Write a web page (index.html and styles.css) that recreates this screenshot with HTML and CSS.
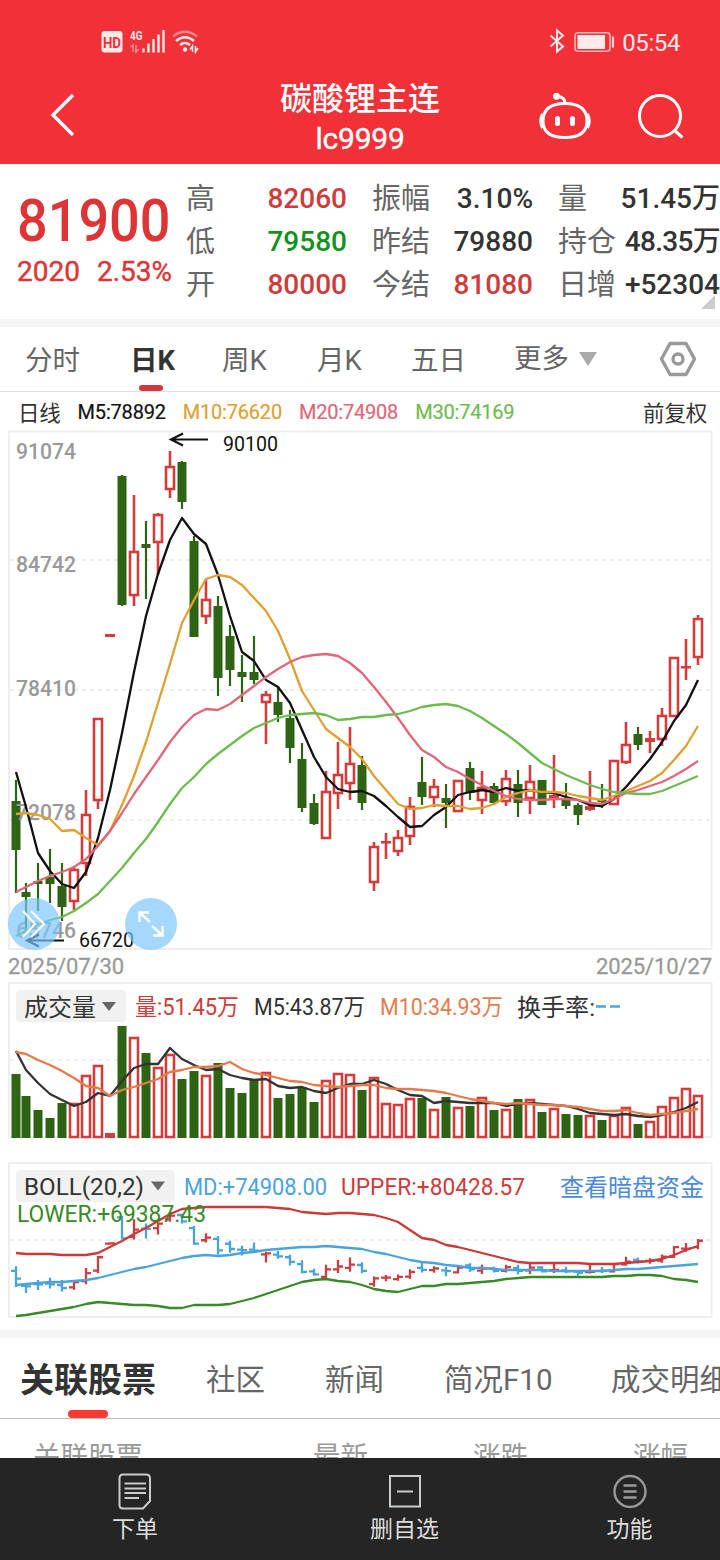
FILE: index.html
```html
<!DOCTYPE html>
<html lang="zh-CN">
<head>
    <meta charset="UTF-8">
    <meta name="viewport" content="width=device-width, initial-scale=1.0">
    <title>碳酸锂主连</title>
    <link rel="stylesheet" href="styles.css">
</head>
<body>
    <div class="app">
        <header class="header">
            <div class="status">
                <svg class="status_left" width="100" height="26" viewBox="100 28 100 26">
                    <rect x="101.5" y="31" width="21" height="21.500" rx="3" fill="#ffe9e9"/>
                    <text x="103" y="47.500" class="hd" textLength="18" lengthAdjust="spacingAndGlyphs">HD</text>
                    <text x="130" y="39.500" class="net" textLength="12.500" lengthAdjust="spacingAndGlyphs">4G</text>
                    <path d="M133 52V45l-2 2M136 45v7l3-3" stroke="#ff8d90" stroke-width="1.500" fill="none"/>
                    <path d="M143.500 48.500V52.500M148.500 43.500V52.500M153.500 39V52.500M158.500 34.500V52.500M163.500 30V52.500" stroke="#ffe9e9" stroke-width="2.400"/>
                    <path d="M173 36.500Q185 27 197 36.500" stroke="#ff8d90" stroke-width="2.200" fill="none"/>
                    <path d="M176 41Q185 33.500 194 41M180 45Q185 41 190 45" stroke="#ffe9e9" stroke-width="2.400" fill="none"/>
                    <circle cx="185" cy="49.500" r="2.200" fill="#ffe9e9"/>
                    <path d="M192.500 52V46l-2.500 3.500M195.500 46v6l2.500-4" stroke="#ffe9e9" stroke-width="1.600" fill="none"/>
                </svg>
                <div class="status_right">
                    <svg width="66" height="26" viewBox="549 28 66 26" fill="none">
                        <path d="M550.500 35.500L563 46.500L557 51.500V30.500L563 35.500L550.500 46.500" stroke="#ffe9e9" stroke-width="2"/>
                        <rect x="575" y="32.700" width="35" height="18.600" rx="3" stroke="#ffb9bb" stroke-width="1.600"/>
                        <rect x="577.500" y="35" width="27.500" height="14" fill="#ffe9e9"/>
                        <path d="M613 36.500v11" stroke="#ffd9da" stroke-width="2.200"/>
                    </svg>
                    <span class="time">05:54</span>
                </div>
            </div>
            <div class="navbar">
                <svg width="30" height="46" viewBox="48 92 30 46" fill="none" stroke="#fff" stroke-width="3.400"><path d="M73 95L53 115L73 135"/></svg>
                <div class="title">
                    <p class="name">碳酸锂主连</p>
                    <p class="code">lc9999</p>
                </div>
                <svg width="150" height="50" viewBox="536 90 150 50" fill="none" stroke="#fff" stroke-width="3">
                    <path d="M565 103.500C579 103.500 587 109 587 121C587 133 579 137.500 565 137.500C551 137.500 543 133 543 121C543 109 551 103.500 565 103.500Z"/>
                    <path d="M565 103.500Q565 96.500 557 96.500"/>
                    <circle cx="556.500" cy="96.300" r="2" fill="#fff"/>
                    <path d="M542.500 114Q539 121 542.500 128M587.500 114Q591 121 587.500 128"/>
                    <path d="M557.500 118.500v5M572.500 118.500v5" stroke-width="5" stroke-linecap="round"/>
                    <circle cx="660" cy="116" r="20.500"/>
                    <path d="M674.500 130.500L682.500 137.500"/>
                </svg>
            </div>
        </header>

        <section class="quote">
            <div class="price">
                <p class="last">81900</p>
                <p class="change"><span>2020</span><span>2.53%</span></p>
            </div>
            <dl class="cols">
                <div><dt>高</dt><dd class="up">82060</dd></div>
                <div><dt>低</dt><dd class="down">79580</dd></div>
                <div><dt>开</dt><dd class="up">80000</dd></div>
            </dl>
            <dl class="cols">
                <div><dt>振幅</dt><dd>3.10%</dd></div>
                <div><dt>昨结</dt><dd>79880</dd></div>
                <div><dt>今结</dt><dd class="up">81080</dd></div>
            </dl>
            <dl class="cols">
                <div><dt>量</dt><dd>51.45万</dd></div>
                <div><dt>持仓</dt><dd class="tight">48.35万</dd></div>
                <div><dt>日增</dt><dd>+52304</dd></div>
            </dl>
            <i class="corner"></i>
        </section>

        <nav class="periods">
            <span>分时</span>
            <span class="active">日K</span>
            <span>周K</span>
            <span>月K</span>
            <span>五日</span>
            <span class="more">更多<i class="arrow"></i></span>
            <svg width="38" height="36" viewBox="0 0 38 36" fill="none" stroke="#999" stroke-width="3.400" stroke-linejoin="round">
                <path d="M11 2.500H27L35.500 18L27 33.500H11L2.500 18Z"/>
                <circle cx="19" cy="18" r="5"/>
            </svg>
        </nav>

        <div class="ma">
            <span class="ma_day">日线</span>
            <span class="m5">M5:78892</span>
            <span class="m10">M10:76620</span>
            <span class="m20">M20:74908</span>
            <span class="m30">M30:74169</span>
            <span class="adjust">前复权</span>
        </div>

        <div class="panel kline">
            <svg width="720" height="520" viewBox="0 430 720 520">
                <path class="grid" d="M10 560H711M10 690H711M10 820H711"/>
                <rect class="frame" x="9" y="431.500" width="702.500" height="517.500"/>
                <g id="candles"></g>
                <g class="axis">
                    <text x="16" y="459" textLength="60">91074</text>
                    <text x="16" y="572" textLength="60">84742</text>
                    <text x="16" y="696" textLength="60">78410</text>
                    <text x="16" y="820" textLength="60">72078</text>
                    <text x="16" y="938" textLength="60">65746</text>
                </g>
                <g id="averages"></g>
                <path class="pointer" d="M208 439.500H171M183 433.500L171 439.500L183 445.500M64 940.500H27M39 934.500L27 940.500L39 946.500"/>
                <text class="mark" x="223" y="451" textLength="55">90100</text>
                <text class="mark" x="79" y="947" textLength="55">66720</text>
            </svg>
            <button class="round slide">
                <svg width="26" height="30" viewBox="0 0 26 30" fill="none" stroke="#fff" stroke-width="2"><path d="M2 2L14 15L2 28M10 2L23 15L10 28"/></svg>
            </button>
            <button class="round full">
                <svg width="28" height="28" viewBox="0 0 28 28" fill="none" stroke="#fff" stroke-width="2.400"><path d="M2.500 12V2.500H12M2.500 2.500L13 12M15 16L25.500 25.500M25.500 16V25.500H16"/></svg>
            </button>
        </div>
        <div class="dates"><span>2025/07/30</span><span>2025/10/27</span></div>

        <div class="panel volume">
            <svg width="720" height="158" viewBox="0 982 720 158">
                <path class="grid" d="M10 1060H711"/>
                <rect class="frame" x="9" y="983" width="702.500" height="154"/>
                <rect class="chip" x="16" y="990" width="110" height="32" rx="4"/>
                <path d="M102 1002h14l-7 9z" fill="#666"/>
                <g class="legend">
                    <text x="24" y="1016" textLength="72" class="dark big">成交量</text>
                    <text x="135" y="1015" textLength="104" class="red">量:51.45万</text>
                    <text x="254" y="1015" textLength="111" class="dark">M5:43.87万</text>
                    <text x="380" y="1015" textLength="123" class="orange">M10:34.93万</text>
                    <text x="517" y="1015.500" textLength="78" class="dark big">换手率:</text>
                </g>
                <path d="M596 1006.500h10M610 1006.500h10" stroke="#4aa3dc" stroke-width="2.400"/>
                <g id="volumes"></g>
            </svg>
        </div>

        <div class="panel boll">
            <svg width="720" height="158" viewBox="0 1162 720 158">
                <path class="grid" d="M10 1240H711"/>
                <rect class="frame" x="9" y="1163" width="702.500" height="154"/>
                <g id="bands"></g>
                <rect class="chip" x="16" y="1170" width="159" height="32" rx="4"/>
                <path d="M151 1181.500h14l-7 9z" fill="#666"/>
                <g class="legend">
                    <text x="24" y="1195" textLength="120" class="dark">BOLL(20,2)</text>
                    <text x="184" y="1195" textLength="143" class="blue">MD:+74908.00</text>
                    <text x="341" y="1195" textLength="184" class="red">UPPER:+80428.57</text>
                    <text x="17" y="1221.500" textLength="189" class="green">LOWER:+69387.43</text>
                    <text x="560" y="1196" textLength="144" class="link big">查看暗盘资金</text>
                </g>
            </svg>
        </div>

        <nav class="related">
            <span class="active">关联股票</span>
            <span>社区</span>
            <span>新闻</span>
            <span>简况F10</span>
            <span>成交明细</span>
        </nav>
        <div class="thead"><span>关联股票</span><span>最新</span><span>涨跌</span><span>涨幅</span></div>

        <footer class="toolbar">
            <div class="tool">
                <svg width="34" height="37" viewBox="0 0 34 37" fill="none" stroke="#ccc" stroke-width="2"><path d="M5 1.500H28Q32 1.500 32 5.500V28L25 35.500H5Q1.500 35.500 1.500 32V5.500Q1.500 1.500 5 1.500Z"/><path d="M6.500 10.500H28M6.500 15.500H28M6.500 20H28M6.500 25H21"/></svg>
                <span>下单</span>
            </div>
            <div class="tool">
                <svg width="34" height="37" viewBox="0 0 34 37" fill="none" stroke="#ccc" stroke-width="2"><path d="M2 3H32V33.500H2ZM9 18.500H25"/></svg>
                <span>删自选</span>
            </div>
            <div class="tool">
                <svg width="34" height="37" viewBox="0 0 34 37" fill="none" stroke="#999" stroke-width="2.400"><circle cx="17" cy="18.500" r="15.500"/><path d="M10.500 12.500H23.500M10.500 18.500H23.500M10.500 24.500H23.500"/></svg>
                <span>功能</span>
            </div>
        </footer>
    </div>
    <script src="chart.js"></script>
</body>
</html>
```

FILE: styles.css
```css
*{
    padding: 0;
    margin: 0;
    border: none;
    box-sizing: border-box;
}
body{
    font-family: Roboto, "Noto Sans CJK SC", sans-serif;
    background-color: #fff;
    color: #333;
}
svg{
    display: block;
}
.app{
    display: flex;
    flex-direction: column;
    width: 720px;
    height: 1560px;
    overflow: hidden;
}

/* header */
.header{
    height: 164px;
    background-color: #f23038;
    color: #fff;
    flex: none;
}
.status{
    display: flex;
    justify-content: space-between;
    padding: 28px 40px 0 100px;
    height: 66px;
}
.hd{
    font-size: 15px;
    font-weight: 700;
    fill: #f23038;
}
.net{
    font-size: 13px;
    font-weight: 700;
    fill: #ffe9e9;
}
.status_right{
    display: flex;
    gap: 7px;
    height: 28px;
}
.time{
    font-size: 24px;
    line-height: 31px;
    letter-spacing: -0.4px;
    color: #ffe9e9;
}
.navbar{
    display: grid;
    grid-template-columns: 168px 288px 32px 150px;
    align-items: center;
    padding-left: 48px;
    height: 98px;
}
.navbar > svg:last-child{
    grid-column: 4;
}
.title{
    text-align: center;
    font-weight: 500;
}
.name{
    font-size: 32px;
    line-height: 40px;
    padding-top: 7px;
}
.code{
    font-size: 30px;
    line-height: 40px;
    letter-spacing: -0.2px;
    font-weight: 400;
    -webkit-text-stroke: 0.4px;
}

/* quote */
.quote{
    position: relative;
    display: grid;
    grid-template-columns: 170px 186px 186px 161px;
    height: 163px;
    padding: 13px 0 0 17px;
    border-bottom: 8px solid #f4f4f4;
    flex: none;
}
.price{
    color: #de3435;
    font-weight: 500;
}
.last{
    font-size: 60px;
    line-height: 66px;
    margin-top: 11px;
    transform: scaleX(0.9);
    transform-origin: left;
}
.change{
    display: flex;
    gap: 17px;
    margin-top: 2px;
    font-size: 28px;
    line-height: 32px;
    font-weight: 400;
    -webkit-text-stroke: 0.4px;
}
.cols div{
    display: flex;
    justify-content: space-between;
    height: 43px;
    line-height: 43px;
}
.cols:nth-of-type(1), .cols:nth-of-type(2){
    padding-right: 26px;
}
.cols dt{
    font-size: 29px;
    line-height: 45px;
    margin-left: -1px;
    color: #666;
}
.cols dd{
    font-size: 28px;
    font-weight: 500;
}
.cols .tight{
    letter-spacing: -0.7px;
}
.cols .up{
    color: #cf3b3b;
}
.cols .down{
    color: #13911a;
}
.corner{
    position: absolute;
    right: 5px;
    bottom: 10px;
    border-left: 14px solid transparent;
    border-bottom: 14px solid #ccc;
}

/* periods */
.periods{
    display: flex;
    align-items: center;
    height: 65px;
    padding-left: 25px;
    border-bottom: 1px solid #e0e0e0;
    font-size: 27.500px;
    color: #666;
    flex: none;
}
.periods span{
    position: relative;
    width: 94px;
    height: 64px;
    line-height: 68px;
    white-space: nowrap;
}
.periods span:first-child{
    width: 105px;
}
.periods span:nth-child(2){
    width: 92px;
}
.periods span:nth-child(3){
    width: 95px;
}
.periods span:nth-child(5){
    width: 103px;
}
.periods .active{
    font-weight: 700;
    color: #333;
}
.periods .active::after{
    content: "";
    position: absolute;
    left: 9px;
    bottom: 0;
    width: 24px;
    height: 6px;
    border-radius: 3px;
    background-color: #d3393b;
}
.periods .more{
    display: flex;
    align-items: center;
    gap: 10px;
    width: 145px;
}
.arrow{
    border: 9px solid transparent;
    border-top: 14px solid #aaa;
    border-bottom: none;
}

/* moving averages */
.ma{
    display: flex;
    align-items: center;
    gap: 17px;
    height: 38px;
    padding: 1px 13px 0 18px;
    font-size: 20px;
    letter-spacing: -0.2px;
    flex: none;
}
.ma_day, .adjust{
    font-size: 21.5px;
}
.adjust{
    margin-left: auto;
}
.m5, .m10, .m20, .m30{
    -webkit-text-stroke: 0.2px;
}
.m5{ color: #111; }
.m10{ color: #e0a030; }
.m20{ color: #e0667a; }
.m30{ color: #6dbb4f; }

/* charts */
.panel{
    position: relative;
    flex: none;
}
.frame{
    fill: none;
    stroke: #eee;
    stroke-width: 2;
}
.grid{
    stroke: #eee;
    stroke-width: 2;
    stroke-dasharray: 4 4;
}
.axis{
    font-size: 22px;
    font-weight: 500;
    fill: #999;
}
.mark{
    font-size: 20px;
    fill: #111;
}
.pointer{
    fill: none;
    stroke: #111;
    stroke-width: 2.2;
}
.line{
    fill: none;
    stroke-width: 2.3;
    stroke-linejoin: round;
}
.legend text{
    font-size: 23px;
}
.legend .big{
    font-size: 24px;
}
.chip{
    fill: #f1f1f1;
}
.dark{ fill: #333; }
.red{ fill: #cf3b3b; }
.orange{ fill: #e67b4a; }
.blue{ fill: #4aa3dc; }
.green{ fill: #378a26; }
.link{ fill: #4a8ad8; }
.round{
    position: absolute;
    top: 468px;
    display: flex;
    justify-content: center;
    align-items: center;
    width: 52px;
    height: 52px;
    border-radius: 50%;
    background-color: rgba(123, 198, 255, 0.68);
}
.slide{
    left: 8px;
}
.full{
    left: 125px;
}
.dates{
    display: flex;
    justify-content: space-between;
    height: 32px;
    line-height: 34px;
    padding: 0 8px;
    font-size: 22px;
    letter-spacing: -0.1px;
    color: #999;
    -webkit-text-stroke: 0.3px;
    flex: none;
}
.boll{
    margin-top: 22px;
}

/* related */
.related{
    display: flex;
    gap: 60px;
    height: 89px;
    margin-top: 10px;
    padding-left: 20px;
    border-top: 8px solid #f4f4f4;
    border-bottom: 1px solid #bbb;
    font-size: 29.500px;
    line-height: 84px;
    color: #666;
    white-space: nowrap;
    flex: none;
}
.related span{
    height: 80px;
}
.related span:nth-child(4){
    width: 107px;
}
.related .active{
    position: relative;
    width: 135px;
    margin-right: -9px;
    font-size: 34px;
    font-weight: 700;
    color: #333;
}
.related .active::after{
    content: "";
    position: absolute;
    left: 48px;
    bottom: 0;
    width: 40px;
    height: 8px;
    border-radius: 4px;
    background-color: #f83a32;
}
.thead{
    display: grid;
    grid-template-columns: 280px 160px 160px 100px;
    height: 39px;
    padding: 18px 0 0 33px;
    font-size: 27.500px;
    line-height: 40px;
    color: #999;
    overflow: hidden;
    flex: none;
}

/* toolbar */
.toolbar{
    display: grid;
    grid-template-columns: 270px 269px 181px;
    height: 102px;
    background-color: #252525;
    color: #ddd;
    flex: none;
}
.tool{
    display: flex;
    flex-direction: column;
    align-items: center;
    padding-top: 15px;
    font-size: 23px;
    line-height: 40px;
}
```

FILE: chart.js
```js
const RED = '#d13c3c'
const GREEN = '#2f6414'
const BLUE = '#4aa3dc'

// r = up, g = down; then high, body top, body bottom, low, volume top
const days = [
    ['g',780,801,850,893,1074],['g',883,892,897,929,1096],['g',863,881,884,911,1110],['g',849,877,884,903,1118],
    ['g',863,886,907,921,1103],['r',866,869,902,910,1103],['r',790,814,864,876,1075],['r',718,718,801,809,1065],
    ['r',634,634,637,637,1133],['g',475,476,605,606,1026],['r',495,551,596,606,1037],['g',521,544,548,599,1053],
    ['r',513,514,543,575,1067],['r',451,466,490,498,1054],['g',461,462,502,509,1079],['g',536,541,637,637,1071],
    ['r',579,599,617,624,1075],['g',596,606,678,696,1063],['g',625,636,670,686,1088],['g',655,672,677,702,1093],
    ['g',636,672,680,684,1079],['r',691,694,703,744,1072],['g',686,702,715,722,1098],['g',710,718,748,763,1094],
    ['g',743,759,808,812,1087],['g',794,803,824,825,1102],['r',771,791,839,839,1080],['r',742,774,794,809,1073],
    ['r',727,763,784,800,1074],['g',756,765,803,810,1090],['r',842,846,883,891,1077],['r',833,841,843,859,1103],
    ['r',830,837,852,856,1104],['r',797,806,837,845,1098],['g',757,782,797,805,1098],['r',779,786,798,807,1109],
    ['g',784,798,803,828,1097],['r',780,780,812,812,1107],['g',762,768,793,800,1106],['r',771,787,801,814,1097],
    ['g',783,786,803,805,1110],['r',770,778,802,806,1109],['g',770,784,803,817,1099],['r',765,781,799,814,1099],
    ['g',780,780,805,805,1112],['r',755,795,798,808,1108],['g',783,798,806,809,1114],['g',803,805,815,825,1115],
    ['r',771,806,810,811,1115],['g',784,800,802,808,1120],['r',760,760,805,805,1115],['r',722,744,763,764,1107],
    ['g',727,734,745,750,1124],['r',731,738,742,753,1121],['r',708,715,740,746,1106],['r',657,657,717,717,1097],
    ['r',639,666,668,680,1088],['r',615,618,658,665,1095]
]

const ma5 = [772,807,853,871,884,888,872,838,790,733,672,616,574,540,518,534,544,575,616,652,661,680,687,703,730,757,777,789,792,791,796,806,817,827,826,815,807,795,792,790,792,788,791,790,792,793,797,800,805,806,799,787,773,759,742,721,705,680]
const ma10 = [814,813,815,819,831,830,838,845,831,805,776,742,703,664,623,600,579,575,577,585,598,611,631,659,691,710,729,738,747,759,776,790,804,809,808,805,806,806,809,808,804,797,793,790,792,792,793,796,798,800,796,791,786,781,773,760,746,726]
const ma20 = [892,887,881,876,872,867,859,846,831,813,794,777,760,742,727,715,709,710,704,695,686,677,669,662,657,655,654,656,663,673,687,702,718,735,750,757,767,772,779,785,791,796,799,800,800,799,799,800,803,804,799,793,790,786,782,776,769,761]
const ma30 = [936,931,925,920,917,911,903,894,881,868,853,839,822,804,788,777,764,754,745,736,728,723,718,715,714,713,715,720,719,717,717,715,714,711,707,705,704,706,711,718,726,734,743,753,763,769,775,780,785,789,792,793,794,794,791,786,781,776]
const vol5 = [1051,1070,1083,1094,1100,1106,1102,1093,1096,1081,1068,1064,1064,1048,1059,1065,1070,1069,1075,1078,1080,1079,1086,1088,1087,1091,1093,1088,1084,1084,1080,1084,1090,1095,1096,1103,1101,1102,1103,1103,1103,1106,1104,1103,1104,1105,1106,1109,1113,1114,1115,1114,1116,1117,1115,1112,1108,1102]
const vol10 = [1052,1054,1060,1065,1071,1078,1086,1088,1096,1090,1087,1083,1079,1072,1070,1067,1067,1066,1062,1069,1073,1075,1078,1081,1082,1085,1086,1087,1086,1085,1085,1088,1089,1089,1090,1091,1093,1096,1099,1101,1103,1104,1103,1104,1105,1105,1106,1107,1109,1111,1111,1110,1113,1115,1114,1113,1111,1109]
const upper = [1253,1254,1254,1254,1255,1255,1255,1253,1247,1241,1234,1228,1221,1214,1209,1208,1207,1207,1207,1207,1207,1207,1208,1209,1212,1213,1214,1213,1213,1214,1215,1218,1222,1230,1238,1240,1245,1247,1250,1253,1256,1259,1262,1263,1263,1263,1263,1263,1264,1264,1264,1263,1262,1261,1259,1255,1250,1246]
const mid = [1285,1284,1283,1282,1282,1281,1280,1278,1275,1272,1269,1267,1264,1261,1258,1256,1255,1256,1255,1253,1252,1250,1249,1248,1247,1247,1246,1247,1248,1249,1252,1254,1257,1260,1262,1263,1265,1266,1268,1268,1269,1270,1270,1270,1270,1271,1271,1271,1271,1271,1270,1269,1269,1268,1267,1266,1265,1264]
const lower = [1316,1315,1313,1311,1309,1307,1304,1302,1303,1304,1305,1305,1306,1308,1308,1305,1305,1305,1304,1301,1298,1294,1290,1286,1282,1280,1279,1281,1282,1285,1289,1291,1292,1289,1286,1286,1284,1284,1283,1282,1281,1279,1278,1277,1277,1277,1277,1277,1277,1277,1276,1276,1275,1275,1276,1279,1280,1282]

const xAt = (i) => i == 0 ? 16 : 14 + 12 * i

function bar(x, top, bottom, up){
    if(!up){
        return `<rect x="${x - 4.5}" y="${top}" width="9" height="${bottom - top}" fill="${GREEN}"/>`
    }
    if(bottom - top < 6){
        return `<rect x="${x - 5}" y="${top}" width="10" height="${Math.max(bottom - top, 2.5)}" fill="${RED}"/>`
    }
    return `<rect x="${x - 4}" y="${top + 1}" width="8" height="${bottom - top - 2}" fill="#fff" stroke="${RED}" stroke-width="2.6"/>`
}

function line(values, color){
    const points = values.map((y, i) => `${xAt(i)},${y}`).join(' ')
    return `<polyline class="line" points="${points}" stroke="${color}"/>`
}

// price position of the main chart scaled into the BOLL panel
const small = (y) => 1217 + (y - 475) * 0.165

let candles = ''
let volumes = ''
let sticks = ''
days.forEach(([type, high, top, bottom, low, vol], i) => {
    const x = xAt(i)
    const up = type == 'r'
    candles += `<path d="M${x} ${high}V${low}" stroke="${up ? RED : GREEN}" stroke-width="${up ? 2.6 : 2.2}"/>` + bar(x, top, bottom, up)
    volumes += bar(x, vol, 1138, up)
    const open = small(up ? bottom - 1 : top + 1)
    const close = small(up ? top + 1 : bottom - 1)
    sticks += `<path d="M${x} ${small(high) - 1}V${small(low) + 1}M${x - 5} ${open}H${x}M${x} ${close}H${x + 5}" stroke="${up ? RED : BLUE}" stroke-width="2.3"/>`
})

document.getElementById('candles').innerHTML = candles
document.getElementById('averages').innerHTML = line(ma5, '#111') + line(ma10, '#e0a030') + line(ma20, '#e0667a') + line(ma30, '#6dbb4f')
document.getElementById('volumes').innerHTML = volumes + line(vol5, '#333') + line(vol10, '#e67b4a')
document.getElementById('bands').innerHTML = sticks + line(upper, '#c93a38') + line(mid, BLUE) + line(lower, '#378a26')

document.querySelectorAll('text[textLength]').forEach((el) => {
    el.setAttribute('lengthAdjust', 'spacingAndGlyphs')
})
```
